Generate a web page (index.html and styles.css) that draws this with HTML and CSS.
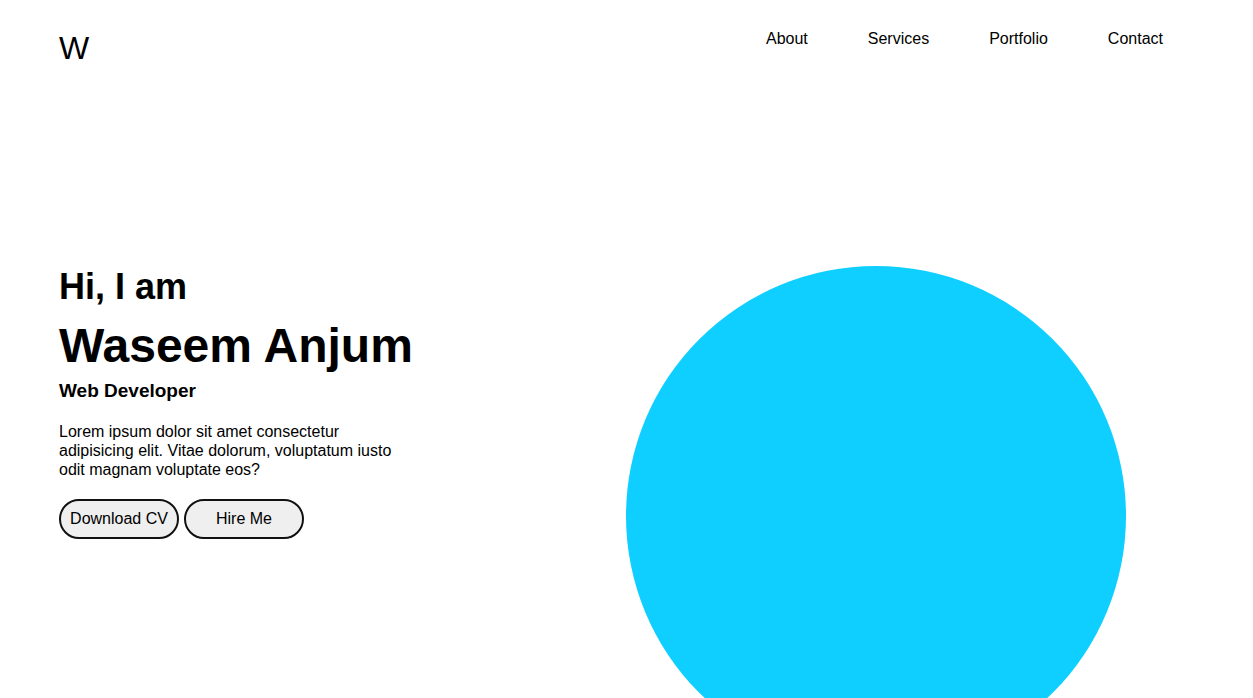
FILE: index.html
```html
<!DOCTYPE html>
<html lang="en">
<head>
<meta charset="utf-8">
<title>Waseem Anjum</title>
<link rel="stylesheet" href="styles.css">
</head>
<body>
<header class="header">
  <div class="logo">W</div>
  <nav class="nav">
    <a class="nav-link" href="#">About</a>
    <a class="nav-link" href="#">Services</a>
    <a class="nav-link" href="#">Portfolio</a>
    <a class="nav-link" href="#">Contact</a>
  </nav>
</header>
<main class="hero">
  <div class="hero-text">
    <h2 class="greet">Hi, I am</h2>
    <h1 class="name">Waseem Anjum</h1>
    <h3 class="role">Web Developer</h3>
    <p class="intro">Lorem ipsum dolor sit amet consectetur adipisicing elit. Vitae dolorum, voluptatum iusto odit magnam voluptate eos?</p>
    <div class="actions">
      <button class="btn">Download CV</button>
      <button class="btn">Hire Me</button>
    </div>
  </div>
  <div class="circle"></div>
</main>
</body>
</html>
```

FILE: styles.css
```css
* {
  box-sizing: border-box;
}

html, body {
  margin: 0;
  padding: 0;
  background: #fff;
  overflow: hidden;
}

body {
  font-family: "Liberation Sans", Arial, sans-serif;
  color: #000;
  padding: 0 90px 0 59px;
}

.header {
  display: flex;
  justify-content: space-between;
  align-items: flex-start;
  padding-top: 30px;
}

.logo {
  font-size: 32px;
  line-height: 37px;
}

.nav {
  display: flex;
  gap: 60px;
}

.nav-link {
  color: #000;
  text-decoration: none;
  font-size: 16px;
  line-height: 18px;
}

.hero {
  display: flex;
  justify-content: space-between;
  align-items: flex-start;
  margin-top: 199px;
}

.hero-text {
  display: flex;
  flex-direction: column;
  align-items: flex-start;
}

.greet {
  margin: 0;
  font-size: 36px;
  line-height: 42px;
  font-weight: bold;
}

.name {
  margin: 10px 0 0;
  font-size: 48px;
  line-height: 56px;
  font-weight: bold;
}

.role {
  margin: 5px 0 0;
  font-size: 19px;
  line-height: 24px;
  font-weight: bold;
}

.intro {
  margin: 19px 0 0;
  width: 350px;
  font-size: 16px;
  line-height: 19px;
}

.actions {
  display: flex;
  gap: 5px;
  margin-top: 20px;
}

.btn {
  width: 120px;
  height: 40px;
  border: 2px solid #111;
  border-radius: 20px;
  background: #efefef;
  color: #000;
  font-family: inherit;
  font-size: 16px;
  padding: 0;
}

.circle {
  width: 500px;
  height: 500px;
  border-radius: 50%;
  background: #0ecfff;
  margin-right: 37px;
  flex-shrink: 0;
}
```
